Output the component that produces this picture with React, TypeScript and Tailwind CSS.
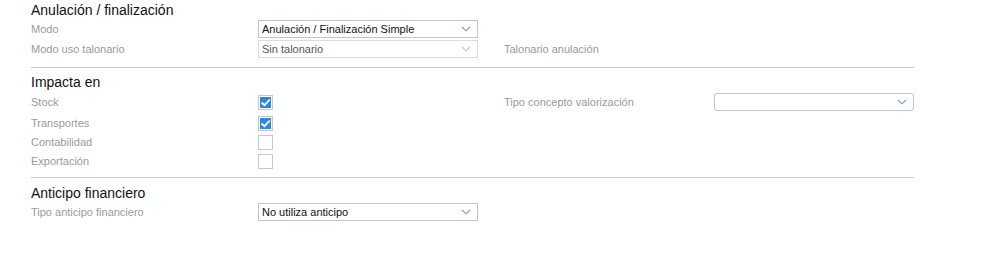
import React from "react";

const Chevron = ({ light }: { light?: boolean }) => (
  <svg width="10" height="6" viewBox="0 0 10 6" className="shrink-0">
    <polyline
      points="1,1 5,4.8 9,1"
      fill="none"
      stroke={light ? "#b3c3ee" : "#7595e6"}
      strokeWidth="1.1"
    />
  </svg>
);

function Select({ value, disabled, wide, rounded }: { value?: string; disabled?: boolean; wide?: boolean; rounded?: boolean }) {
  return (
    <div
      className={`${wide ? "w-[200px]" : "w-[220px]"} h-[18px] shrink-0 flex items-center justify-between pl-[3px] pr-[6px] border ${
        disabled ? "border-[#dcdcdc] text-[#555]" : "border-[#c4c4c4] text-[#111]"
      } ${rounded ? "rounded-[3px]" : ""} bg-white text-[11px] leading-none`}
    >
      <span>{value}</span>
      <Chevron light={disabled} />
    </div>
  );
}

function Checkbox({ checked }: { checked?: boolean }) {
  return (
    <div className="w-[15px] h-[15px] border border-[#c8c8c8] bg-white p-px">
      {checked && (
        <div className="w-full h-full bg-[#2b8ae0] flex items-center justify-center">
          <svg width="11" height="9" viewBox="0 0 11 9">
            <polyline points="1.5,4.5 4.5,7.2 9.8,1.5" fill="none" stroke="#fff" strokeWidth="1.8" />
          </svg>
        </div>
      )}
    </div>
  );
}

const Label = ({ children, w = "w-[227px]" }: { children?: React.ReactNode; w?: string }) => (
  <div className={`${w} shrink-0 text-[11px] leading-[18px] text-[#9a9a9a]`}>{children}</div>
);

const Title = ({ children }: { children: React.ReactNode }) => (
  <h2 className="h-5 text-[14px] leading-5 text-[#111]">{children}</h2>
);

const Divider = ({ mt }: { mt: string }) => <div className={`${mt} h-px bg-[#cccccc]`} />;

function CheckRow({ label, checked, h, children }: { label: string; checked?: boolean; h: string; children?: React.ReactNode }) {
  return (
    <div className={`${h} flex items-start`}>
      <div className="mt-px">
        <Label>{label}</Label>
      </div>
      <div className="w-[220px] mt-[3px]">
        <Checkbox checked={checked} />
      </div>
      {children}
    </div>
  );
}

export default function App() {
  return (
    <div className="w-[1000px] h-[271px] bg-white font-['Liberation_Sans',Arial,sans-serif]">
      <div className="pl-[31px] w-[914px]">
        <Title>Anulación / finalización</Title>
        <div className="h-5 flex items-start">
          <Label>Modo</Label>
          <Select value="Anulación / Finalización Simple" />
        </div>
        <div className="h-5 flex items-start">
          <Label>Modo uso talonario</Label>
          <Select value="Sin talonario" disabled />
          <div className="ml-[26px]">
            <Label w="w-[210px]">Talonario anulación</Label>
          </div>
        </div>
        <Divider mt="mt-[7px]" />

        <div className="mt-[4px]">
          <Title>Impacta en</Title>
        </div>
        <CheckRow label="Stock" checked h="h-[21px]">
          <div className="ml-[26px] mt-px flex items-start">
            <Label w="w-[210px]">Tipo concepto valorización</Label>
            <Select wide rounded />
          </div>
        </CheckRow>
        <CheckRow label="Transportes" checked h="h-[19px]" />
        <CheckRow label="Contabilidad" h="h-[19px]" />
        <CheckRow label="Exportación" h="h-[19px]" />
        <Divider mt="mt-[7px]" />

        <div className="mt-[5px]">
          <Title>Anticipo financiero</Title>
        </div>
        <div className="h-5 flex items-start">
          <Label>Tipo anticipo financiero</Label>
          <Select value="No utiliza anticipo" />
        </div>
      </div>
    </div>
  );
}
